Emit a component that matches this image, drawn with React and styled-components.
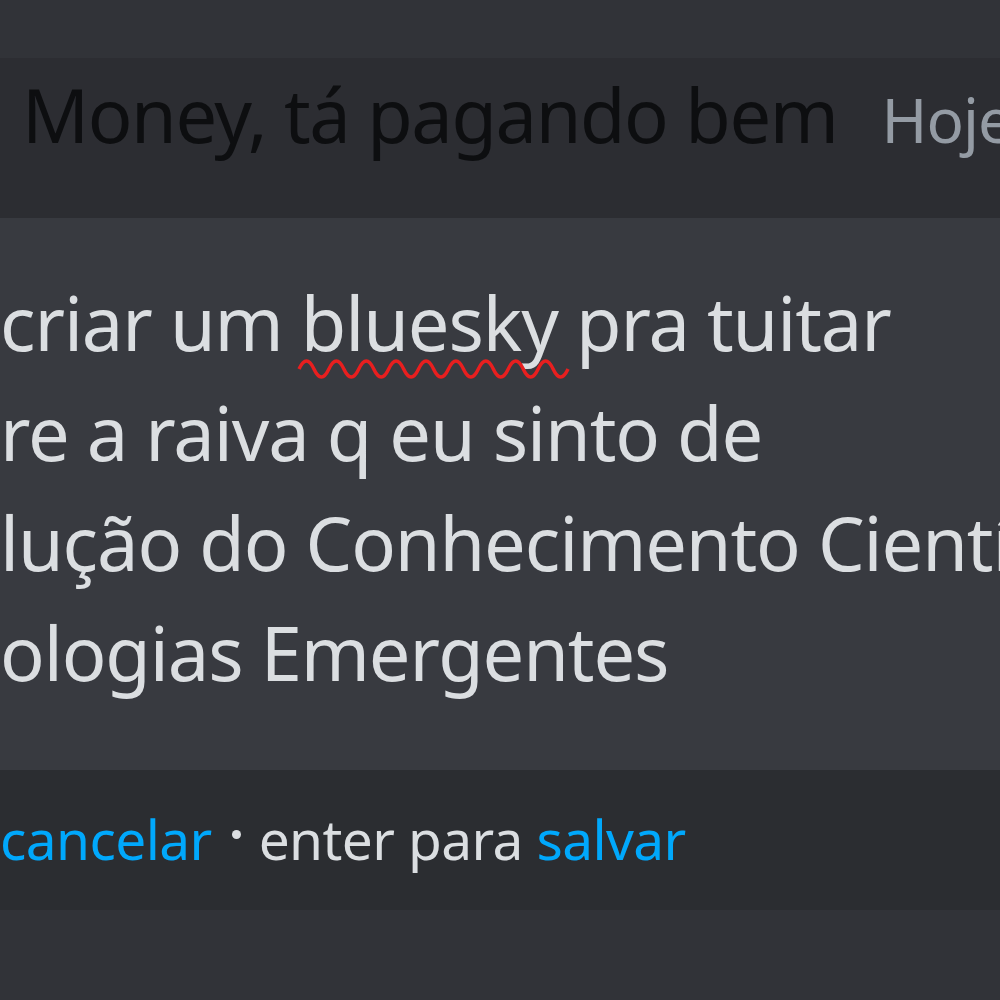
import React from "react";
import styled, { createGlobalStyle } from "styled-components";

const GlobalStyle = createGlobalStyle`
  html, body {
    margin: 0;
    padding: 0;
    background: #313338;
    overflow: hidden;
  }
`;

const Page = styled.div`
  width: 1000px;
  height: 1000px;
  overflow: hidden;
  display: flex;
  flex-direction: column;
  background: #313338;
  font-family: "Noto Sans", "Open Sans", sans-serif;
`;

const TopSpace = styled.div`
  height: 58px;
  background: #313338;
`;

const HeaderRow = styled.div`
  height: 160px;
  background: #2c2d32;
  display: flex;
  align-items: baseline;
  padding-left: 22px;
  padding-top: 20px;
  box-sizing: border-box;
  white-space: nowrap;
`;

const Title = styled.span`
  font-size: 74px;
  line-height: 1;
  letter-spacing: -1.4px;
  color: #0d0e10;
`;

const Stamp = styled.span`
  font-size: 62px;
  line-height: 1;
  letter-spacing: -1px;
  color: #949ba4;
  margin-left: 44px;
`;

const EditBox = styled.div`
  height: 552px;
  background: #383a40;
  padding-top: 50px;
  box-sizing: border-box;
`;

const Line = styled.div`
  font-size: 74px;
  line-height: 110px;
  height: 110px;
  letter-spacing: -1.1px;
  color: #dbdee1;
  white-space: nowrap;
`;

const Misspelled = styled.span`
  position: relative;
`;

const Squiggle = styled.svg`
  position: absolute;
  left: -2px;
  bottom: -6px;
  width: calc(100% + 2px);
  height: 20px;
  overflow: visible;
`;

const Footer = styled.div`
  height: 140px;
  background: #2b2d31;
  display: flex;
  align-items: center;
  padding-bottom: 4px;
  box-sizing: border-box;
  font-size: 55px;
  letter-spacing: -0.6px;
  color: #dbdee1;
  white-space: nowrap;
`;

const Link = styled.span`
  color: #00a8fc;
`;

const Dot = styled.span`
  display: inline-block;
  width: 9px;
  height: 9px;
  border-radius: 50%;
  background: #dbdee1;
  margin: 0 18px 0 20px;
  align-self: center;
  transform: translateY(-4px);
`;

function Wave() {
  let d = "M0 10";
  for (let x = 0; x < 260; x += 30) {
    d += " q7.5 -16 15 0 q7.5 16 15 0";
  }
  return (
    <Squiggle viewBox="0 0 260 20" preserveAspectRatio="none">
      <path d={d} fill="none" stroke="#e81f1f" strokeWidth="3.5" />
    </Squiggle>
  );
}

export default function App() {
  return (
    <Page>
      <GlobalStyle />
      <TopSpace />
      <HeaderRow>
        <Title>Money, tá pagando bem</Title>
        <Stamp>Hoje às 14:32</Stamp>
      </HeaderRow>
      <EditBox>
        <Line>
          criar um{" "}
          <Misspelled>
            bluesky
            <Wave />
          </Misspelled>{" "}
          pra tuitar
        </Line>
        <Line>re a raiva q eu sinto de</Line>
        <Line>lução do Conhecimento Científico e</Line>
        <Line>ologias Emergentes</Line>
      </EditBox>
      <Footer>
        <Link>cancelar</Link>
        <Dot />
        enter para&nbsp;<Link>salvar</Link>
      </Footer>
    </Page>
  );
}
